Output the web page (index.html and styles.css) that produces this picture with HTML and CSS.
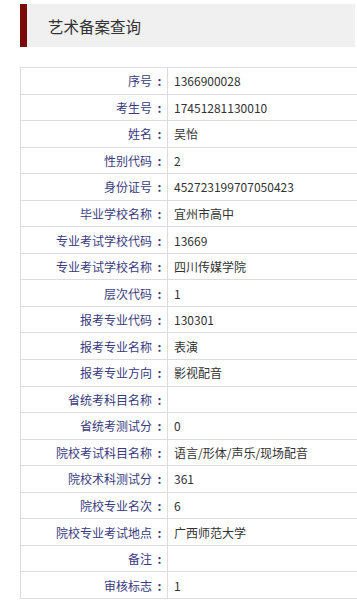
FILE: index.html
```html
<!DOCTYPE html>
<html lang="zh">
<head>
<meta charset="utf-8">
<link rel="stylesheet" href="styles.css">
</head>
<body>
<div class="page">
  <div class="title-bar"><h1 class="title">艺术备案查询</h1></div>
  <div class="info">
    <div class="row"><div class="label">序号<span class="colon">:</span></div><div class="value">1366900028</div></div>
    <div class="row"><div class="label">考生号<span class="colon">:</span></div><div class="value">17451281130010</div></div>
    <div class="row"><div class="label">姓名<span class="colon">:</span></div><div class="value">吴怡</div></div>
    <div class="row"><div class="label">性别代码<span class="colon">:</span></div><div class="value">2</div></div>
    <div class="row"><div class="label">身份证号<span class="colon">:</span></div><div class="value">452723199707050423</div></div>
    <div class="row"><div class="label">毕业学校名称<span class="colon">:</span></div><div class="value">宜州市高中</div></div>
    <div class="row"><div class="label">专业考试学校代码<span class="colon">:</span></div><div class="value">13669</div></div>
    <div class="row"><div class="label">专业考试学校名称<span class="colon">:</span></div><div class="value">四川传媒学院</div></div>
    <div class="row"><div class="label">层次代码<span class="colon">:</span></div><div class="value">1</div></div>
    <div class="row"><div class="label">报考专业代码<span class="colon">:</span></div><div class="value">130301</div></div>
    <div class="row"><div class="label">报考专业名称<span class="colon">:</span></div><div class="value">表演</div></div>
    <div class="row"><div class="label">报考专业方向<span class="colon">:</span></div><div class="value">影视配音</div></div>
    <div class="row"><div class="label">省统考科目名称<span class="colon">:</span></div><div class="value"></div></div>
    <div class="row"><div class="label">省统考测试分<span class="colon">:</span></div><div class="value">0</div></div>
    <div class="row"><div class="label">院校考试科目名称<span class="colon">:</span></div><div class="value">语言/形体/声乐/现场配音</div></div>
    <div class="row"><div class="label">院校术科测试分<span class="colon">:</span></div><div class="value">361</div></div>
    <div class="row"><div class="label">院校专业名次<span class="colon">:</span></div><div class="value">6</div></div>
    <div class="row"><div class="label">院校专业考试地点<span class="colon">:</span></div><div class="value">广西师范大学</div></div>
    <div class="row"><div class="label">备注<span class="colon">:</span></div><div class="value"></div></div>
    <div class="row"><div class="label">审核标志<span class="colon">:</span></div><div class="value">1</div></div>
  </div>
</div>
</body>
</html>
```

FILE: styles.css
```css
html, body {
  margin: 0;
  padding: 0;
  background: #fff;
  overflow: hidden;
}
body {
  font-family: "Noto Sans CJK SC", "Noto Sans", sans-serif;
  font-size: 12px;
  color: #333;
}
.page {
  padding: 4px 0 0 20px;
}
.title-bar {
  width: 335px;
  height: 43px;
  box-sizing: border-box;
  background: #f0f0f0;
  border-left: 7px solid #7a0a0a;
  display: flex;
  align-items: center;
  padding-left: 21px;
}
.title {
  margin: 0;
  font-size: 15.5px;
  font-weight: normal;
  color: #333;
}
.info {
  margin-top: 20px;
  width: 345px;
  border-top: 1px solid #dcdcdc;
  border-left: 1px solid #dcdcdc;
}
.row {
  display: grid;
  grid-template-columns: 147px 1fr;
  height: 26.55px;
  box-sizing: border-box;
  border-bottom: 1px solid #dcdcdc;
}
.label {
  border-right: 1px solid #dcdcdc;
  color: #3a3a7e;
  display: flex;
  align-items: center;
  justify-content: flex-end;
  white-space: nowrap;
}
.colon {
  display: inline-block;
  width: 15px;
  text-align: center;
  font-weight: bold;
}
.value {
  padding-left: 6px;
  display: flex;
  align-items: center;
  color: #333;
  white-space: nowrap;
}
```
